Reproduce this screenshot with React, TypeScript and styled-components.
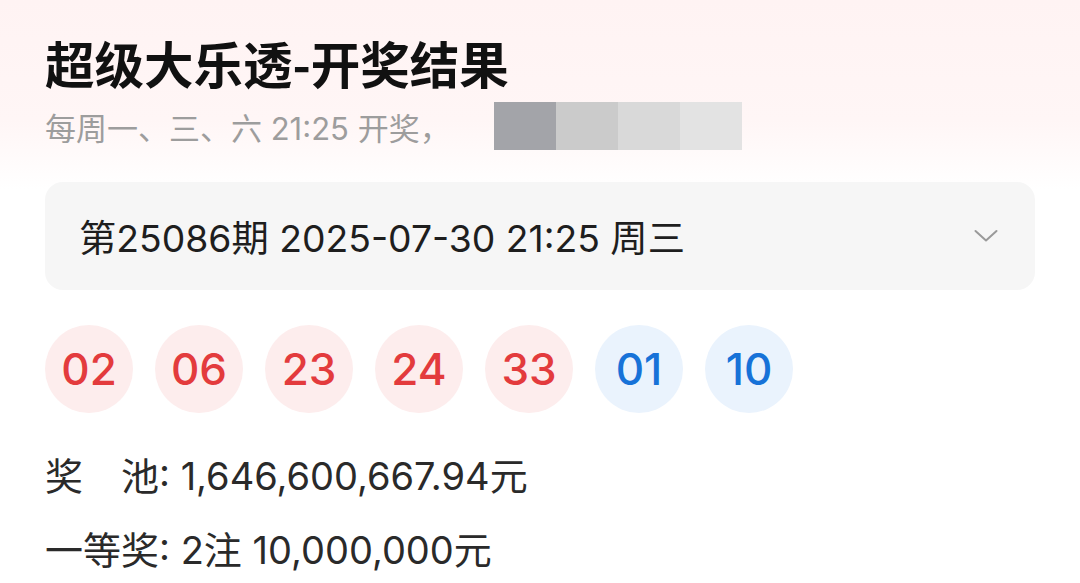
import React from "react";
import styled, { createGlobalStyle } from "styled-components";

const GlobalStyle = createGlobalStyle`
  html, body {
    margin: 0;
    padding: 0;
  }
  body {
    width: 1080px;
    height: 583px;
    overflow: hidden;
    background: linear-gradient(180deg, #fff3f3 0px, #fff6f6 120px, #ffffff 190px, #ffffff 100%);
    font-family: Inter, "Noto Sans CJK SC", "Noto Sans", sans-serif;
    color: #222;
  }
`;

const Page = styled.div`
  padding: 30px 45px 0 45px;
`;

const Title = styled.h1`
  margin: 0;
  font-family: "Noto Sans CJK SC", sans-serif;
  font-size: 49.5px;
  font-weight: 700;
  line-height: 66px;
  color: #111;
`;

const Subtitle = styled.div`
  display: flex;
  align-items: center;
  height: 60px;
  font-size: 31px;
  color: #9d9d9d;
`;

const Mosaic = styled.div`
  display: flex;
  margin-left: 43px;
  height: 48px;
`;

const MosaicTile = styled.div<{ $c: string }>`
  width: 62px;
  height: 100%;
  background: ${(p) => p.$c};
`;

const IssueCard = styled.div`
  margin-top: 26px;
  height: 108px;
  display: flex;
  align-items: center;
  justify-content: space-between;
  padding: 0 37px 0 34px;
  background: #f6f6f6;
  border-radius: 18px;
`;

const IssueText = styled.span`
  font-size: 37.3px;
  color: #1e1e1e;
`;

const BallRow = styled.div`
  display: flex;
  gap: 22px;
  margin-top: 35px;
`;

const Ball = styled.div<{ $blue?: boolean }>`
  width: 88px;
  height: 88px;
  border-radius: 50%;
  display: flex;
  align-items: center;
  justify-content: center;
  font-size: 44px;
  font-weight: 500;
  background: ${(p) => (p.$blue ? "#eaf3fd" : "#fdeded")};
  color: ${(p) => (p.$blue ? "#1772d8" : "#e33b3d")};
`;

const Info = styled.div`
  margin-top: 23px;
`;

const InfoLine = styled.div`
  display: flex;
  align-items: center;
  height: 74px;
  font-size: 38px;
  color: #2a2a2a;
`;

const Label = styled.span`
  display: inline-flex;
  justify-content: space-between;
  width: 3em;
`;

const Chevron = () => (
  <svg width="24" height="14" viewBox="0 0 24 14" fill="none">
    <polyline points="1.5,2 12,11.5 22.5,2" stroke="#9a9a9a" strokeWidth="2" strokeLinecap="round" strokeLinejoin="round" />
  </svg>
);

const red = ["02", "06", "23", "24", "33"];
const blue = ["01", "10"];
const mosaic = ["#a3a4a9", "#cbcbcb", "#d9d9d9", "#e3e3e3"];

const App: React.FC = () => {
  return (
    <>
      <GlobalStyle />
      <Page>
        <Title>超级大乐透-开奖结果</Title>
        <Subtitle>
          每周一、三、六 21:25 开奖，
          <Mosaic>
            {mosaic.map((c) => (
              <MosaicTile key={c} $c={c} />
            ))}
          </Mosaic>
        </Subtitle>

        <IssueCard>
          <IssueText>第25086期 2025-07-30 21:25 周三</IssueText>
          <Chevron />
        </IssueCard>

        <BallRow>
          {red.map((n) => (
            <Ball key={"r" + n}>{n}</Ball>
          ))}
          {blue.map((n) => (
            <Ball key={"b" + n} $blue>
              {n}
            </Ball>
          ))}
        </BallRow>

        <Info>
          <InfoLine>
            <Label>
              <span>奖</span>
              <span>池</span>
            </Label>
            : 1,646,600,667.94元
          </InfoLine>
          <InfoLine>一等奖: 2注 10,000,000元</InfoLine>
        </Info>
      </Page>
    </>
  );
};

export default App;
